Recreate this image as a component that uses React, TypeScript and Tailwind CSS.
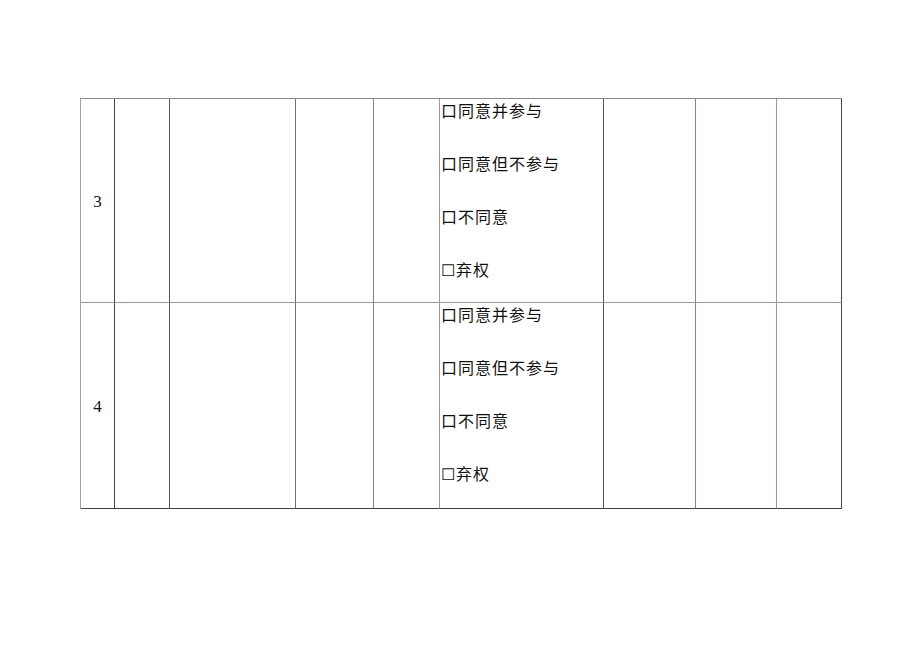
const cols = [
  { w: 'w-[34px]', b: 'border-r-[#4e3f5e]' },
  { w: 'w-[55px]', b: 'border-r-[#5c4d69]' },
  { w: 'w-[126px]', b: 'border-r-[#707070]' },
  { w: 'w-[78px]', b: 'border-r-[#858585]' },
  { w: 'w-[66px]', b: 'border-r-[#9a9a9a]' },
  { w: 'w-[164px]', b: 'border-r-[#555555]' },
  { w: 'w-[92px]', b: 'border-r-[#8d7f99]' },
  { w: 'w-[81px]', b: 'border-r-[#a08fae]' },
  { w: 'w-[65px]', b: 'border-r-[#4a3b58]' },
];

const options = ['口同意并参与', '口同意但不参与', '口不同意', '☐弃权'];

function Row({ num, last }: { num: string; last: boolean }) {
  const h = last ? 'h-[206px]' : 'h-[204px]';
  const bottom = last ? 'border-b-[#4a3b55]' : 'border-b-[#8fa08f]';
  return (
    <div className="flex">
      {cols.map((c, i) => (
        <div key={i} className={`${c.w} ${h} shrink-0 border-r border-b ${c.b} ${bottom}`}>
          {i === 0 && (
            <div className="h-full flex items-center justify-center pt-[2px] text-[17px] text-[#111] font-['Liberation_Serif',serif]">
              {num}
            </div>
          )}
          {i === 5 && (
            <div className="flex flex-col gap-[31px] pl-[1px] pt-0">
              {options.map((o) => (
                <div key={o} className="h-[22px] leading-[22px] text-[16px] tracking-[1px] text-[#111] font-['Noto_Sans_CJK_SC','Noto_Sans',sans-serif]">
                  {o}
                </div>
              ))}
            </div>
          )}
        </div>
      ))}
    </div>
  );
}

export default function App() {
  return (
    <div className="w-[920px] h-[651px] bg-white pt-[98px] pl-[80px]">
      <div className="inline-flex flex-col border-t border-l border-t-[#888888] border-l-[#a0a0a0]">
        <Row num="3" last={false} />
        <Row num="4" last={true} />
      </div>
    </div>
  );
}
